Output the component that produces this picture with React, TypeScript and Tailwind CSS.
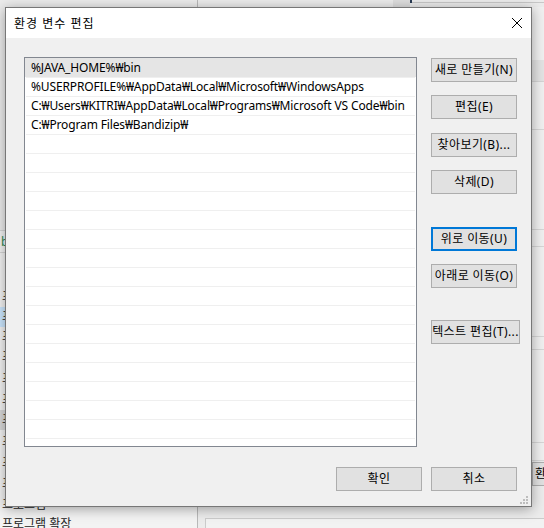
import React from "react";

const paths = [
  "%JAVA_HOME%₩bin",
  "%USERPROFILE%₩AppData₩Local₩Microsoft₩WindowsApps",
  "C:₩Users₩KITRI₩AppData₩Local₩Programs₩Microsoft VS Code₩bin",
  "C:₩Program Files₩Bandizip₩",
];

const leftRows = [
  { t: "프로그램 및 기능", h: "h-[20px]", bg: "" },
  { t: "프로그램 기본값", h: "h-[20px]", bg: "bg-[#cce8ff]" },
  { t: "프로그램 추가", h: "h-[20px]", bg: "" },
  { t: "프로그램 제거", h: "h-[20px]", bg: "" },
  { t: "프로그램 설정", h: "h-[23px]", bg: "" },
  { t: "프로그램 목록", h: "h-[20px]", bg: "" },
  { t: "프로그램 실행", h: "h-[20px]", bg: "bg-[#d9d9d9]" },
  { t: "프로그램 업데이트", h: "h-[23px]", bg: "" },
  { t: "프로그램 호환성", h: "h-[20px]", bg: "" },
  { t: "프로그램 정보", h: "h-[22px]", bg: "" },
  { t: "프로그램", h: "h-[19px]", bg: "" },
  { t: "프로그램 확장", h: "h-[20px]", bg: "" },
];

const rightBands = [
  "h-[48px]",
  "h-[100px]",
  "h-[17px]",
  "h-[90px]",
  "h-[13px]",
  "h-[93px]",
  "h-[18px]",
];

function Btn({
  label,
  className = "",
  focused = false,
}: {
  label: string;
  className?: string;
  focused?: boolean;
}) {
  return (
    <div
      className={`h-[24px] shrink-0 flex items-center justify-center whitespace-nowrap text-[12px] tracking-[0.4px] text-black bg-[#e1e1e1] ${
        focused ? "border-2 border-[#0078d7]" : "border border-[#adadad]"
      } ${className}`}
    >
      {label}
    </div>
  );
}

export default function App() {
  return (
    <div className="relative w-[544px] h-[528px] overflow-hidden bg-[#f0f0f0] font-['Noto_Sans','Noto_Sans_CJK_KR',sans-serif] text-[12px] leading-none">
      {/* background window on the left */}
      <div className="absolute left-0 top-0 bottom-0 w-[197px] flex flex-col bg-[#f3f3f3] text-[#222]">
        <div className="shrink-0 h-[231px] bg-[#ececec] border-b border-[#d6d6d6]" />
        <div className="shrink-0 h-[22px] border-b border-[#d6d6d6] flex items-center pl-[1px] text-[#2e8b57]">
          bin
        </div>
        <div className="shrink-0 h-[34px]" />
        {leftRows.map((r) => (
          <div key={r.t} className={`${r.h} ${r.bg} shrink-0 flex items-center pl-[2px] whitespace-nowrap`}>
            {r.t}
          </div>
        ))}
      </div>

      {/* background window on the right */}
      <div className="absolute left-[197px] top-0 right-0 bottom-0 flex flex-col border-l border-[#b9b9b9] bg-[#ececec]">
        <div className="h-[7px] flex">
          <div className="w-[195px]" />
          <div className="w-[17px] h-full bg-[#dedede]" />
          <div className="w-[2px] h-[3px] bg-[#2b3d55]" />
          <div className="flex-1 mt-[2px] h-px bg-[#c8c8c8]" />
        </div>
        <div className="h-[53px] bg-[#f0f0f0]" />
        <div className="h-[22px] bg-[#e3e3e3] border-b border-[#d4d4d4]" />
        {rightBands.map((h, i) => (
          <div key={i} className={`${h} border-b border-[#d6d6d6] bg-[#f0f0f0]`} />
        ))}
        <div className="ml-[334px] mt-[1px] w-[100px] h-[24px] flex items-center pl-[2px] bg-[#e1e1e1] border border-[#adadad] whitespace-nowrap">
          환경 변수(N)...
        </div>
        <div className="h-[32px]" />
        <div className="flex-1 ml-[7px] border-t border-l border-[#cbcbcb] bg-[#f2f2f2]" />
      </div>

      {/* dialog */}
      <div className="absolute left-[5px] top-[7px] w-[527px] h-[500px] flex flex-col border border-[#777777] shadow-[0_2px_12px_rgba(0,0,0,0.35)]">
        <div className="h-[30px] bg-white flex items-center justify-between pl-[8px] pr-[9px]">
          <span className="text-[12px] tracking-[1px] text-black pt-[1px]">환경 변수 편집</span>
          <svg width="10" height="10" viewBox="0 0 10 10" className="block">
            <path d="M0 0 L10 10 M10 0 L0 10" stroke="#000" strokeWidth="1" fill="none" />
          </svg>
        </div>

        <div className="relative flex-1 flex flex-col bg-[#f0f0f0] pt-[19px] pl-[18px] pr-[14px]">
          <div className="flex">
            <div className="shrink-0 w-[393px] h-[390px] border border-[#828790] bg-white overflow-hidden">
              {Array.from({ length: 21 }).map((_, i) => (
                <div key={i}>
                  <div
                    className={`${i === 0 ? "h-[19px] bg-[#e5e5e5]" : "h-[18px]"} flex items-center pl-[6px] whitespace-nowrap text-[12px] tracking-[-0.14px] text-black`}
                  >
                    {paths[i] ?? ""}
                  </div>
                  <div className="mx-[1px] h-px bg-[#efefef]" />
                </div>
              ))}
            </div>

            <div className="shrink-0 ml-[14px] flex flex-col items-start">
              <Btn label="새로 만들기(N)" className="mt-[1px] w-[86px]" />
              <Btn label="편집(E)" className="mt-[13px] w-[86px]" />
              <Btn label="찾아보기(B)..." className="mt-[14px] w-[86px]" />
              <Btn label="삭제(D)" className="mt-[13px] w-[86px]" />
              <Btn label="위로 이동(U)" className="mt-[33px] w-[86px]" focused />
              <Btn label="아래로 이동(O)" className="mt-[13px] w-[86px]" />
              <Btn label="텍스트 편집(T)..." className="mt-[32px] w-[89px]" />
            </div>
          </div>

          <div className="mt-[20px] flex justify-end gap-[9px]">
            <Btn label="확인" className="w-[86px]" />
            <Btn label="취소" className="w-[86px]" />
          </div>

          <svg width="9" height="9" viewBox="0 0 9 9" className="absolute right-[2px] bottom-[1px]">
            <rect x="6" y="0" width="2" height="2" fill="#bdbdbd" />
            <rect x="3" y="3" width="2" height="2" fill="#bdbdbd" />
            <rect x="6" y="3" width="2" height="2" fill="#bdbdbd" />
            <rect x="0" y="6" width="2" height="2" fill="#bdbdbd" />
            <rect x="3" y="6" width="2" height="2" fill="#bdbdbd" />
            <rect x="6" y="6" width="2" height="2" fill="#bdbdbd" />
          </svg>
        </div>
      </div>
    </div>
  );
}
